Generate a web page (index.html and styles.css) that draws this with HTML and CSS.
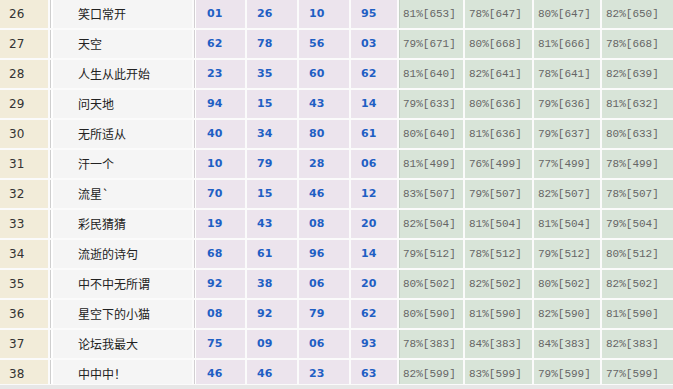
FILE: index.html
```html
<!DOCTYPE html>
<html lang="zh">
<head>
<meta charset="utf-8">
<title>排行</title>
<link rel="stylesheet" href="styles.css">
</head>
<body>
<div class="viewport">
  <div class="board">
    <div class="row"><div class="c-no">26</div><div class="c-name">笑口常开</div><div class="c-n first">01</div><div class="c-n">26</div><div class="c-n">10</div><div class="c-n">95</div><div class="c-p first">81%[653]</div><div class="c-p">78%[647]</div><div class="c-p">80%[647]</div><div class="c-p">82%[650]</div></div>
    <div class="row"><div class="c-no">27</div><div class="c-name">天空</div><div class="c-n first">62</div><div class="c-n">78</div><div class="c-n">56</div><div class="c-n">03</div><div class="c-p first">79%[671]</div><div class="c-p">80%[668]</div><div class="c-p">81%[666]</div><div class="c-p">78%[668]</div></div>
    <div class="row"><div class="c-no">28</div><div class="c-name">人生从此开始</div><div class="c-n first">23</div><div class="c-n">35</div><div class="c-n">60</div><div class="c-n">62</div><div class="c-p first">81%[640]</div><div class="c-p">82%[641]</div><div class="c-p">78%[641]</div><div class="c-p">82%[639]</div></div>
    <div class="row"><div class="c-no">29</div><div class="c-name">问天地</div><div class="c-n first">94</div><div class="c-n">15</div><div class="c-n">43</div><div class="c-n">14</div><div class="c-p first">79%[633]</div><div class="c-p">80%[636]</div><div class="c-p">79%[636]</div><div class="c-p">81%[632]</div></div>
    <div class="row"><div class="c-no">30</div><div class="c-name">无所适从</div><div class="c-n first">40</div><div class="c-n">34</div><div class="c-n">80</div><div class="c-n">61</div><div class="c-p first">80%[640]</div><div class="c-p">81%[636]</div><div class="c-p">79%[637]</div><div class="c-p">80%[633]</div></div>
    <div class="row"><div class="c-no">31</div><div class="c-name">汗一个</div><div class="c-n first">10</div><div class="c-n">79</div><div class="c-n">28</div><div class="c-n">06</div><div class="c-p first">81%[499]</div><div class="c-p">76%[499]</div><div class="c-p">77%[499]</div><div class="c-p">78%[499]</div></div>
    <div class="row"><div class="c-no">32</div><div class="c-name">流星`</div><div class="c-n first">70</div><div class="c-n">15</div><div class="c-n">46</div><div class="c-n">12</div><div class="c-p first">83%[507]</div><div class="c-p">79%[507]</div><div class="c-p">82%[507]</div><div class="c-p">78%[507]</div></div>
    <div class="row"><div class="c-no">33</div><div class="c-name">彩民猜猜</div><div class="c-n first">19</div><div class="c-n">43</div><div class="c-n">08</div><div class="c-n">20</div><div class="c-p first">82%[504]</div><div class="c-p">81%[504]</div><div class="c-p">81%[504]</div><div class="c-p">79%[504]</div></div>
    <div class="row"><div class="c-no">34</div><div class="c-name">流逝的诗句</div><div class="c-n first">68</div><div class="c-n">61</div><div class="c-n">96</div><div class="c-n">14</div><div class="c-p first">79%[512]</div><div class="c-p">78%[512]</div><div class="c-p">79%[512]</div><div class="c-p">80%[512]</div></div>
    <div class="row"><div class="c-no">35</div><div class="c-name">中不中无所谓</div><div class="c-n first">92</div><div class="c-n">38</div><div class="c-n">06</div><div class="c-n">20</div><div class="c-p first">80%[502]</div><div class="c-p">82%[502]</div><div class="c-p">80%[502]</div><div class="c-p">82%[502]</div></div>
    <div class="row"><div class="c-no">36</div><div class="c-name">星空下的小猫</div><div class="c-n first">08</div><div class="c-n">92</div><div class="c-n">79</div><div class="c-n">62</div><div class="c-p first">80%[590]</div><div class="c-p">81%[590]</div><div class="c-p">82%[590]</div><div class="c-p">81%[590]</div></div>
    <div class="row"><div class="c-no">37</div><div class="c-name">论坛我最大</div><div class="c-n first">75</div><div class="c-n">09</div><div class="c-n">06</div><div class="c-n">93</div><div class="c-p first">78%[383]</div><div class="c-p">84%[383]</div><div class="c-p">84%[383]</div><div class="c-p">82%[383]</div></div>
    <div class="row"><div class="c-no">38</div><div class="c-name">中中中！</div><div class="c-n first">46</div><div class="c-n">46</div><div class="c-n">23</div><div class="c-n">63</div><div class="c-p first">82%[599]</div><div class="c-p">83%[599]</div><div class="c-p">79%[599]</div><div class="c-p">77%[599]</div></div>
  </div>
</div>
<div class="footer-strip"></div>
</body>
</html>
```

FILE: styles.css
```css
html, body {
  margin: 0;
  padding: 0;
  background: #fbfbfb;
  overflow: hidden;
}

.viewport {
  height: 384px;
  overflow: hidden;
}

.board {
  display: flex;
  flex-direction: column;
  gap: 2px;
  width: 673px;
}

.row {
  display: grid;
  grid-template-columns: 48px 142px 51px 50px 50px 46px 64px 67px 66px 72px;
  column-gap: 2px;
  height: 28px;
}

.row > div {
  line-height: 28px;
  white-space: nowrap;
  overflow: hidden;
  box-sizing: border-box;
}

.c-no {
  background: #f2ecd9;
  color: #333;
  font-family: "DejaVu Sans", sans-serif;
  font-size: 12px;
  padding-left: 9px;
}

.c-name {
  background: #f5f5f5;
  color: #222;
  font-family: "Noto Sans CJK SC", sans-serif;
  font-size: 12px;
  padding-left: 27px;
  border-left: 1px solid #cfcfcf;
  box-shadow: inset 2px 0 0 #ffffff;
}

.c-n {
  background: #ece4ed;
  color: #1f5fc4;
  font-family: "DejaVu Sans", sans-serif;
  font-weight: bold;
  font-size: 11px;
  padding-left: 10px;
}

.c-n.first {
  border-left: 1px solid #d2cfd2;
  box-shadow: inset 1px 0 0 #ffffff;
  padding-left: 12px;
}

.c-p {
  background: #d8e4d8;
  color: #666;
  font-family: "Liberation Mono", monospace;
  font-size: 11px;
  padding-left: 4px;
}

.c-p.first {
  border-left: 1px solid #c6d2c6;
  padding-left: 3px;
}

.footer-strip {
  height: 4px;
  border-top: 1px solid #fafafa;
  background: #e7e7e7;
}
```
